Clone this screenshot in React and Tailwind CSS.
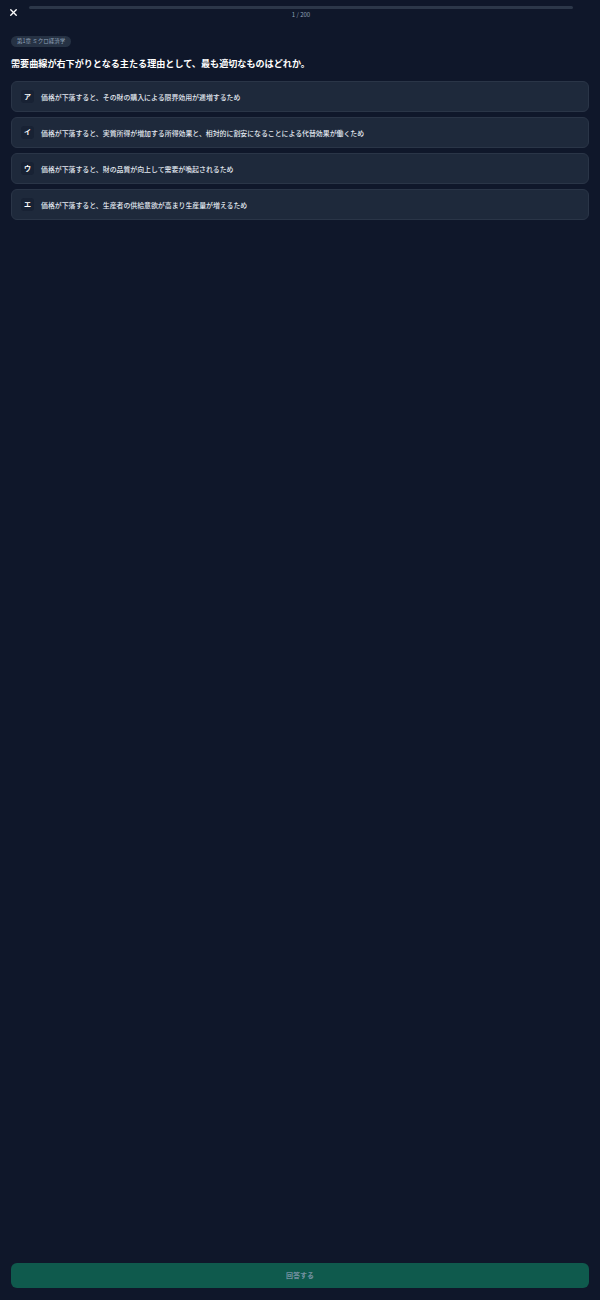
import { X } from "lucide-react";

const options = [
  { key: "ア", text: "価格が下落すると、その財の購入による限界効用が逓増するため" },
  { key: "イ", text: "価格が下落すると、実質所得が増加する所得効果と、相対的に割安になることによる代替効果が働くため" },
  { key: "ウ", text: "価格が下落すると、財の品質が向上して需要が喚起されるため" },
  { key: "エ", text: "価格が下落すると、生産者の供給意欲が高まり生産量が増えるため" },
];

export default function App() {
  return (
    <div
      className="min-h-screen flex flex-col bg-[#0f172a] text-white"
      style={{ fontFamily: '"Noto Sans CJK JP", "Noto Sans", sans-serif' }}
    >
      {/* Header: close + progress */}
      <div className="flex items-start gap-[10px] pl-[8px] pr-[27px] pt-[6px]">
        <button className="mt-[1px] text-white">
          <X className="w-[11px] h-[11px]" strokeWidth={3} />
        </button>
        <div className="flex-1 flex flex-col">
          <div className="h-[3px] rounded-full bg-[#2c3749]" />
          <div className="mt-[2px] text-center text-[6px] leading-[8px] text-slate-400">1 / 200</div>
        </div>
      </div>

      {/* Question */}
      <div className="px-[11px] pt-[17px]">
        <div className="flex w-fit items-center h-[11px] px-[6px] rounded-full bg-[#263244] text-[5.5px] leading-none text-slate-400">
          第1章 ミクロ経済学
        </div>
        <h1 className="mt-[10px] text-[9.1px] leading-[13px] font-bold text-white">
          需要曲線が右下がりとなる主たる理由として、最も適切なものはどれか。
        </h1>

        <div className="mt-[11px] flex flex-col gap-[5px]">
          {options.map((o) => (
            <div
              key={o.key}
              className="flex items-center gap-[7px] h-[31px] px-[9px] rounded-[6px] border border-[#2a3547] bg-[#1e293b]"
            >
              <span className="w-[13px] h-[13px] shrink-0 flex items-center justify-center rounded-[3px] bg-[#182234] text-[7px] font-bold text-white">
                {o.key}
              </span>
              <span className="text-[6.9px] leading-[10px] font-medium text-slate-200">{o.text}</span>
            </div>
          ))}
        </div>
      </div>

      {/* Submit */}
      <div className="mt-auto px-[11px] pb-[12px]">
        <button className="w-full h-[25px] rounded-[6px] bg-[#0f5a4d] text-[7px] font-bold text-slate-400/80">
          回答する
        </button>
      </div>
    </div>
  );
}
